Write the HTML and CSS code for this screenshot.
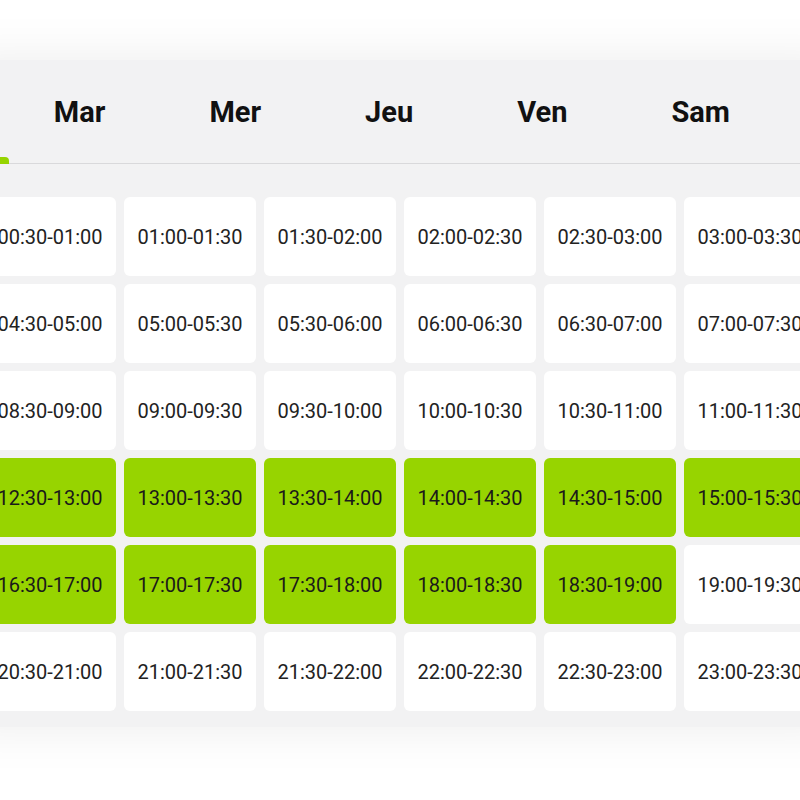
FILE: index.html
```html
<!DOCTYPE html>
<html lang="fr">
<head>
<meta charset="utf-8">
<title>Créneaux</title>
<link rel="stylesheet" href="styles.css">
</head>
<body>
<section class="panel">
  <nav class="tabs">
    <div class="tab active">Lun</div>
    <div class="tab">Mar</div>
    <div class="tab">Mer</div>
    <div class="tab">Jeu</div>
    <div class="tab">Ven</div>
    <div class="tab">Sam</div>
    <div class="tab">Dim</div>
  </nav>
  <div class="slots">
    <div class="slot">00:00-00:30</div>
    <div class="slot">00:30-01:00</div>
    <div class="slot">01:00-01:30</div>
    <div class="slot">01:30-02:00</div>
    <div class="slot">02:00-02:30</div>
    <div class="slot">02:30-03:00</div>
    <div class="slot">03:00-03:30</div>
    <div class="slot">03:30-04:00</div>

    <div class="slot">04:00-04:30</div>
    <div class="slot">04:30-05:00</div>
    <div class="slot">05:00-05:30</div>
    <div class="slot">05:30-06:00</div>
    <div class="slot">06:00-06:30</div>
    <div class="slot">06:30-07:00</div>
    <div class="slot">07:00-07:30</div>
    <div class="slot">07:30-08:00</div>

    <div class="slot">08:00-08:30</div>
    <div class="slot">08:30-09:00</div>
    <div class="slot">09:00-09:30</div>
    <div class="slot">09:30-10:00</div>
    <div class="slot">10:00-10:30</div>
    <div class="slot">10:30-11:00</div>
    <div class="slot">11:00-11:30</div>
    <div class="slot">11:30-12:00</div>

    <div class="slot on">12:00-12:30</div>
    <div class="slot on">12:30-13:00</div>
    <div class="slot on">13:00-13:30</div>
    <div class="slot on">13:30-14:00</div>
    <div class="slot on">14:00-14:30</div>
    <div class="slot on">14:30-15:00</div>
    <div class="slot on">15:00-15:30</div>
    <div class="slot on">15:30-16:00</div>

    <div class="slot on">16:00-16:30</div>
    <div class="slot on">16:30-17:00</div>
    <div class="slot on">17:00-17:30</div>
    <div class="slot on">17:30-18:00</div>
    <div class="slot on">18:00-18:30</div>
    <div class="slot on">18:30-19:00</div>
    <div class="slot">19:00-19:30</div>
    <div class="slot">19:30-20:00</div>

    <div class="slot">20:00-20:30</div>
    <div class="slot">20:30-21:00</div>
    <div class="slot">21:00-21:30</div>
    <div class="slot">21:30-22:00</div>
    <div class="slot">22:00-22:30</div>
    <div class="slot">22:30-23:00</div>
    <div class="slot">23:00-23:30</div>
    <div class="slot">23:30-00:00</div>
  </div>
</section>
</body>
</html>
```
FILE: styles.css
```css
html, body {
  margin: 0;
  padding: 0;
  background: #ffffff;
  overflow: hidden;
}

body {
  width: 800px;
  height: 800px;
  font-family: Roboto, "Liberation Sans", sans-serif;
  color: #1f1f1f;
}

.panel {
  margin-top: 60px;
  margin-left: -40px;
  width: 880px;
  height: 667px;
  background: #f2f2f3;
  box-shadow: 0 0 48px rgba(0, 0, 0, 0.08);
  overflow: hidden;
  box-sizing: border-box;
}

.tabs {
  display: flex;
  height: 103px;
  margin-left: -110px;
  border-bottom: 1px solid #d9d9db;
  margin-right: -200px;
}

.tab {
  position: relative;
  flex: none;
  display: flex;
  align-items: center;
  padding: 0 52px;
  font-size: 29px;
  font-weight: 700;
  color: #111111;
}

.tab.active::after {
  content: "";
  position: absolute;
  left: 0;
  right: -7px;
  bottom: -1px;
  height: 7px;
  background: #96d400;
  border-radius: 4px 4px 0 0;
}

.slots {
  display: grid;
  grid-template-columns: repeat(8, 132px);
  grid-auto-rows: 79px;
  gap: 8px;
  padding-top: 33px;
  margin-left: -116px;
}

.slot {
  background: #ffffff;
  border-radius: 6px;
  display: flex;
  align-items: center;
  justify-content: center;
  font-size: 20px;
  color: #222222;
}

.slot.on {
  background: #97d400;
  color: #1a1a1a;
}
```
